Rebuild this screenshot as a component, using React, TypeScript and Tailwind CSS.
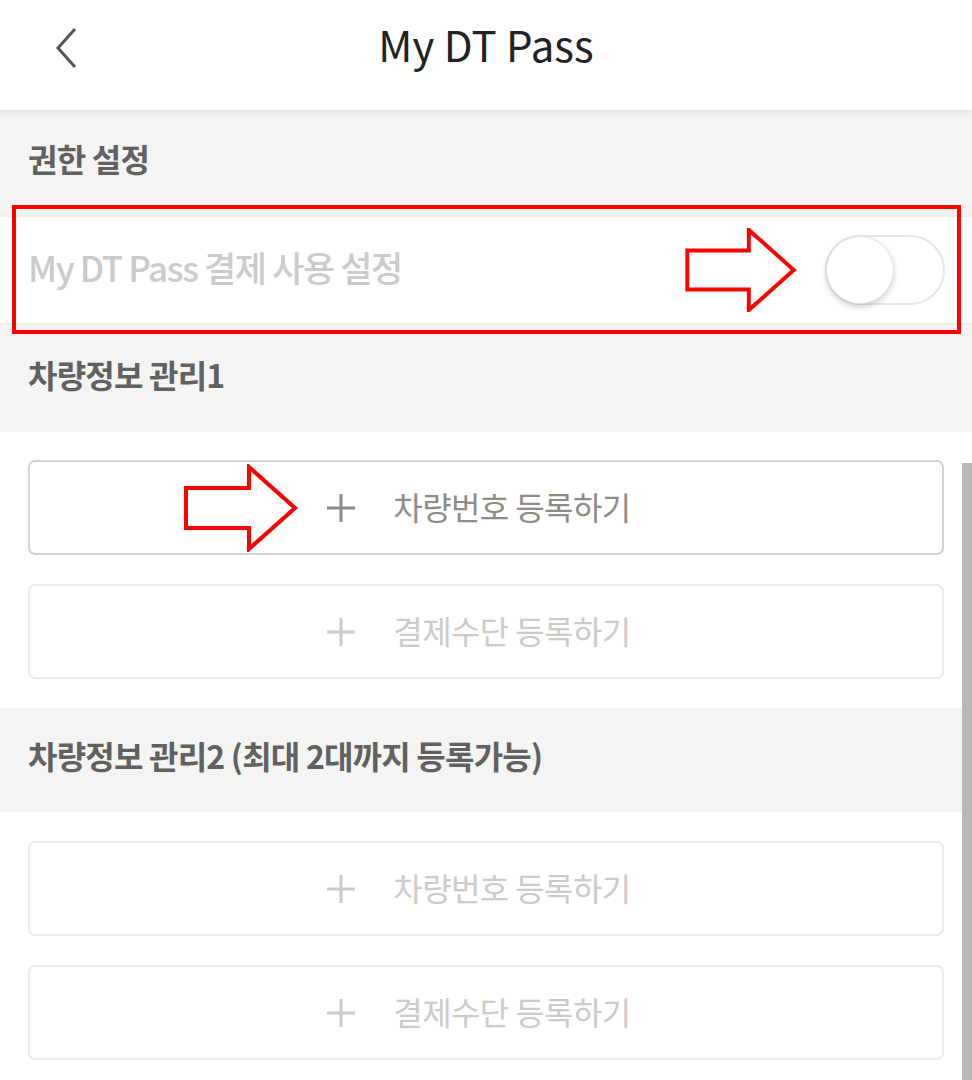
import React from "react";

const font = { fontFamily: '"Noto Sans CJK KR", "Noto Sans", sans-serif' };

function RedArrow({ className }: { className: string }) {
  return (
    <svg className={className} viewBox="0 0 114 86" fill="none">
      <path
        d="M2 23 H65 V2 L111 43 L65 84 V63 H2 Z"
        stroke="#ff0000"
        strokeWidth="4"
        fill="white"
        strokeLinejoin="miter"
      />
    </svg>
  );
}

function AddButton({ label, active }: { label: string; active?: boolean }) {
  return (
    <div
      className={`mx-[28px] h-[95px] rounded-[7px] bg-white flex items-center justify-center border-2 ${
        active ? "border-[#d2d2d0] text-[#8f8b85]" : "border-[#ebebea] text-[#cdcbc8]"
      }`}
    >
      <svg width="30" height="30" viewBox="0 0 30 30" className="mr-[37px]">
        <path d="M15 1 V29 M1 15 H29" stroke="currentColor" strokeWidth="3" />
      </svg>
      <span className="text-[32px] tracking-[-0.6px] leading-none -mt-[4px] mr-[15px]">{label}</span>
    </div>
  );
}

function SectionHeader({ title, h }: { title: string; h: string }) {
  return (
    <div className={`${h} bg-[#f4f4f2] flex items-center px-[28px]`}>
      <span className="text-[32px] font-bold text-[#616161] tracking-[-0.8px] leading-none -mt-[10px]">
        {title}
      </span>
    </div>
  );
}

export default function App() {
  return (
    <div className="relative w-[972px] h-[1080px] overflow-hidden bg-white" style={font}>
      {/* header */}
      <div className="relative z-10 h-[110px] bg-white flex items-center justify-center shadow-[0_3px_6px_rgba(0,0,0,0.08)]">
        <svg className="absolute left-[52px] top-[26px]" width="28" height="44" viewBox="0 0 28 44" fill="none">
          <path d="M23 3 L6 22 L23 41" stroke="#555" strokeWidth="3" />
        </svg>
        <span className="text-[42px] text-[#222] leading-none -mt-[22px]">My DT Pass</span>
      </div>

      <SectionHeader title="권한 설정" h="h-[105px]" />

      <div className="h-[110px] bg-white border-y-2 border-[#efefed] flex items-center justify-between px-[28px]">
        <span className="text-[35px] font-medium text-[#cbcbcb] tracking-[-1.4px] leading-none -mt-[8px]">
          My DT Pass 결제 사용 설정
        </span>
        <div className="relative w-[120px] h-[70px] rounded-full border-2 border-[#e6e6e6] bg-white mr-[-1px]">
          <div className="absolute -left-[1px] -top-[1px] w-[68px] h-[68px] rounded-full bg-white border border-[#e2e2e2] shadow-[0_3px_6px_rgba(0,0,0,0.18)]" />
        </div>
      </div>

      <SectionHeader title="차량정보 관리1" h="h-[107px]" />

      <div className="bg-white pt-[28px] pb-[29px] flex flex-col gap-[29px]">
        <AddButton label="차량번호 등록하기" active />
        <AddButton label="결제수단 등록하기" />
      </div>

      <SectionHeader title="차량정보 관리2 (최대 2대까지 등록가능)" h="h-[104px]" />

      <div className="bg-white pt-[29px] flex flex-col gap-[29px]">
        <AddButton label="차량번호 등록하기" />
        <AddButton label="결제수단 등록하기" />
      </div>

      {/* overlay scrollbar */}
      <div className="absolute right-0 top-[463px] w-[10px] h-[617px] bg-[#b8b8b8]" />

      {/* annotations */}
      <div className="absolute left-[12px] top-[205px] w-[949px] h-[129px] border-4 border-[#ff0000]" />
      <RedArrow className="absolute left-[684px] top-[228px] w-[114px] h-[84px]" />
      <RedArrow className="absolute left-[184px] top-[464px] w-[114px] h-[88px]" />
    </div>
  );
}
